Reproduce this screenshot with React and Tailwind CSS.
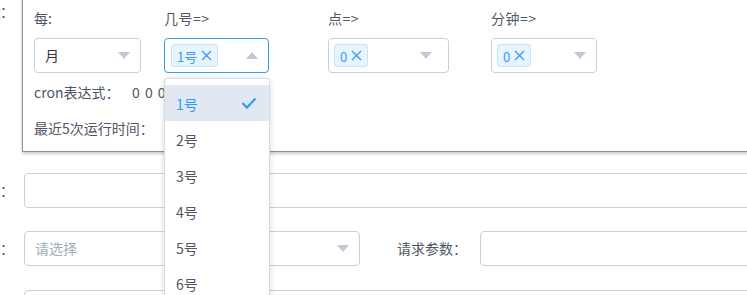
import React from "react";

const font = { fontFamily: '"Noto Sans CJK SC", "Noto Sans", sans-serif' };

function Caret({ up = false, className = "" }) {
  return (
    <svg width="12" height="7" viewBox="0 0 12 7" className={className}>
      {up ? <path d="M0 7 L6 0 L12 7 Z" fill="#c0cad6" /> : <path d="M0 0 L6 7 L12 0 Z" fill="#c0cad6" />}
    </svg>
  );
}

function Tag({ children }) {
  return (
    <span className="flex items-center gap-[4px] h-[23px] px-[5px] rounded-[3px] border border-[#c4e4fb] bg-[#e6f4fd] text-[#3a9af0] text-[13px] leading-none">
      <span className="pt-[2px]">{children}</span>
      <svg width="11" height="11" viewBox="0 0 11 11">
        <path d="M1 1 L10 10 M10 1 L1 10" stroke="#3a9af0" strokeWidth="1.3" />
      </svg>
    </span>
  );
}

export default function App() {
  const items = ["1号", "2号", "3号", "4号", "5号", "6号"];
  return (
    <div className="relative w-[747px] h-[295px] overflow-hidden bg-white text-[14px] text-[#4f5664]" style={font}>
      {/* form rows underneath */}
      <div className="flex flex-col">
        <div className="flex items-center h-[35px] mt-[-6px]">
          <span className="w-[14px] overflow-hidden flex justify-start">：</span>
        </div>
        <div className="h-[144px]" />
        <div className="flex items-center">
          <span className="w-[14px] overflow-hidden flex justify-start">：</span>
          <div className="ml-[10px] flex-1 h-[35px] rounded-[4px] border border-[#c3d2e0] mr-[-10px]" />
        </div>
        <div className="flex items-center mt-[23px]">
          <span className="w-[14px] overflow-hidden flex justify-start">：</span>
          <div className="ml-[10px] w-[336px] h-[35px] rounded-[4px] border border-[#c3d2e0] flex items-center justify-between pl-[10px] pr-[10px]">
            <span className="text-[#a3acbb]">请选择</span>
            <Caret />
          </div>
          <span className="ml-[37px] w-[83px]">请求参数：</span>
          <div className="flex-1 h-[35px] rounded-[4px] border border-[#c3d2e0] mr-[-10px]" />
        </div>
        <div className="flex items-center mt-[24px]">
          <span className="w-[14px]" />
          <div className="ml-[10px] flex-1 h-[35px] rounded-[4px] border border-[#c3d2e0] mr-[-10px]" />
        </div>
      </div>

      {/* cron popover */}
      <div className="absolute left-[22px] top-[-10px] w-[740px] h-[162px] bg-white border border-[#8f8f8f] shadow-[0_2px_3px_rgba(0,0,0,0.2)] pl-[11px] pt-[17px]">
        <div className="flex">
          <div className="w-[107px] mr-[23px] flex flex-col">
            <span className="h-[20px] leading-[20px]">每:</span>
            <div className="mt-[10px] h-[35px] rounded-[4px] border border-[#c3d2e0] flex items-center justify-between pl-[10px] pr-[10px] text-[#333]">
              <span>月</span>
              <Caret />
            </div>
          </div>
          <div className="w-[105px] mr-[59px] flex flex-col">
            <span className="h-[20px] leading-[20px] tracking-[0.5px]">几号=&gt;</span>
            <div className="mt-[10px] h-[35px] rounded-[4px] border border-[#2d9cf5] flex items-center justify-between pl-[6px] pr-[10px]">
              <Tag>1号</Tag>
              <Caret up />
            </div>
          </div>
          <div className="w-[121px] mr-[42px] flex flex-col">
            <span className="h-[20px] leading-[20px] tracking-[0.5px]">点=&gt;</span>
            <div className="mt-[10px] h-[35px] rounded-[4px] border border-[#c3d2e0] flex items-center justify-between pl-[5px] pr-[16px]">
              <Tag>0</Tag>
              <Caret />
            </div>
          </div>
          <div className="w-[106px] flex flex-col">
            <span className="h-[20px] leading-[20px] tracking-[0.5px]">分钟=&gt;</span>
            <div className="mt-[10px] h-[35px] rounded-[4px] border border-[#c3d2e0] flex items-center justify-between pl-[5px] pr-[10px]">
              <Tag>0</Tag>
              <Caret />
            </div>
          </div>
        </div>
        <div className="flex mt-[9px] h-[20px] leading-[20px]">
          <span className="w-[98px]">cron表达式：</span>
          <span className="tracking-[1px]">0 0 0</span>
        </div>
        <div className="mt-[16px] h-[20px] leading-[20px]">最近5次运行时间：</div>
      </div>

      {/* dropdown */}
      <div className="absolute left-[164px] top-[78px] w-[106px] h-[240px] bg-white border border-[#d3dce6] rounded-[3px] shadow-[0_1px_6px_rgba(0,0,0,0.15)] pt-[6px]">
        {items.map((it, i) => (
          <div
            key={it}
            className={
              "h-[36px] flex items-center justify-between pl-[11px] pr-[12px] " +
              (i === 0 ? "bg-[#e2e8f1] text-[#2d9cf5]" : "text-[#4f5664]")
            }
          >
            <span className="pt-[2px]">{it}</span>
            {i === 0 && (
              <svg width="16" height="12" viewBox="0 0 16 12">
                <path d="M1.5 6 L6 10.5 L14.5 1.5" stroke="#2d9cf5" strokeWidth="2.2" fill="none" />
              </svg>
            )}
          </div>
        ))}
      </div>
    </div>
  );
}
